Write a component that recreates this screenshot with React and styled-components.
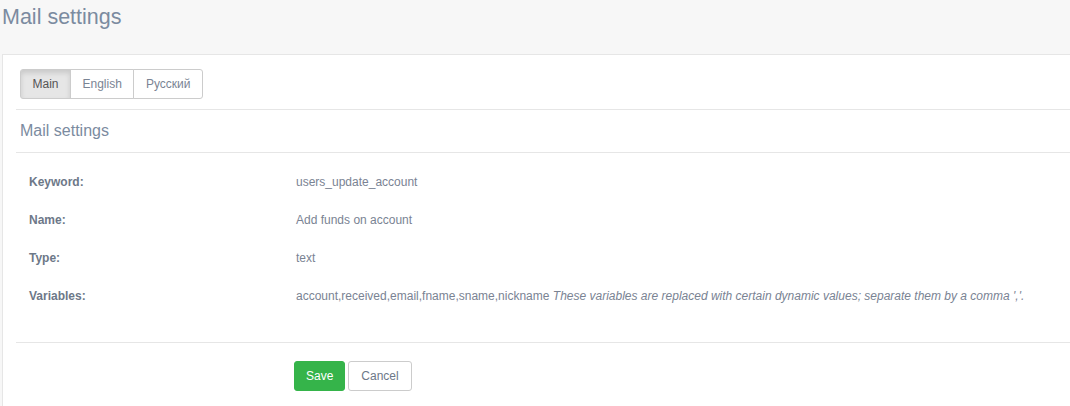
import React from "react";
import styled, { createGlobalStyle } from "styled-components";

const GlobalStyle = createGlobalStyle`
  html, body {
    margin: 0;
    padding: 0;
    background: #f7f7f7;
    font-family: "Liberation Sans", Arial, sans-serif;
    overflow: hidden;
  }
`;

const Page = styled.div`
  height: 406px;
  display: flex;
  flex-direction: column;
`;

const Header = styled.div`
  height: 54px;
  padding: 3px 0 0 2px;
  box-sizing: border-box;
`;

const Title = styled.h1`
  margin: 0;
  font-size: 21.5px;
  font-weight: normal;
  line-height: 28px;
  color: #7b8ba0;
`;

const Panel = styled.div`
  flex: 1;
  margin-left: 2px;
  background: #fff;
  border-top: 1px solid #e6e6e6;
  border-left: 1px solid #e6e6e6;
  padding: 14px 0 0 13px;
`;

const Tabs = styled.div`
  display: inline-flex;
  margin-left: 4px;
`;

const Tab = styled.button`
  height: 30px;
  padding: 0 11.5px;
  font-family: inherit;
  font-size: 12px;
  color: ${(p) => (p.$active ? "#555" : "#7a8494")};
  background: ${(p) => (p.$active ? "#e6e6e6" : "#fff")};
  box-shadow: ${(p) => (p.$active ? "inset 0 3px 5px rgba(0,0,0,0.125)" : "none")};
  border: 1px solid #ccc;
  margin-left: -1px;
  border-radius: 0;
  cursor: pointer;
  &:first-child {
    margin-left: 0;
    border-radius: 3px 0 0 3px;
  }
  &:last-child {
    border-radius: 0 3px 3px 0;
  }
`;

const Rule = styled.div`
  height: 1px;
  background: #e6e6e6;
  margin-top: ${(p) => p.$top || 0}px;
`;

const Subheading = styled.h2`
  margin: 0;
  padding: 12px 4px;
  font-size: 16px;
  font-weight: normal;
  line-height: 18px;
  color: #7b8ba0;
`;

const Fields = styled.div`
  padding: 10px 0 27px;
`;

const Row = styled.div`
  display: grid;
  grid-template-columns: 267px 1fr;
  height: 38px;
  align-items: center;
  padding-left: 13px;
  font-size: 12px;
`;

const Label = styled.div`
  font-weight: bold;
  color: #6d7888;
`;

const Value = styled.div`
  color: #7a8393;
  white-space: nowrap;
`;

const Hint = styled.i`
  color: #7a8393;
`;

const Actions = styled.div`
  display: flex;
  gap: 3px;
  padding: 18px 0 0 278px;
`;

const Button = styled.button`
  height: 30px;
  padding: 0 ${(p) => (p.$primary ? 11 : 12)}px;
  font-family: inherit;
  font-size: 12px;
  border-radius: 3px;
  cursor: pointer;
  color: ${(p) => (p.$primary ? "#fff" : "#6d7888")};
  background: ${(p) => (p.$primary ? "#35b44a" : "#fff")};
  border: 1px solid ${(p) => (p.$primary ? "#35b44a" : "#ccc")};
`;

const fields = [
  { label: "Keyword:", value: "users_update_account" },
  { label: "Name:", value: "Add funds on account" },
  { label: "Type:", value: "text" },
  {
    label: "Variables:",
    value: "account,received,email,fname,sname,nickname",
    hint: "These variables are replaced with certain dynamic values; separate them by a comma ','.",
  },
];

export default function App() {
  return (
    <>
      <GlobalStyle />
      <Page>
        <Header>
          <Title>Mail settings</Title>
        </Header>
        <Panel>
          <Tabs>
            <Tab $active>Main</Tab>
            <Tab>English</Tab>
            <Tab>Русский</Tab>
          </Tabs>
          <Rule $top={10} />
          <Subheading>Mail settings</Subheading>
          <Rule />
          <Fields>
            {fields.map((f) => (
              <Row key={f.label}>
                <Label>{f.label}</Label>
                <Value>
                  {f.value}
                  {f.hint && <Hint> {f.hint}</Hint>}
                </Value>
              </Row>
            ))}
          </Fields>
          <Rule />
          <Actions>
            <Button $primary>Save</Button>
            <Button>Cancel</Button>
          </Actions>
        </Panel>
      </Page>
    </>
  );
}
